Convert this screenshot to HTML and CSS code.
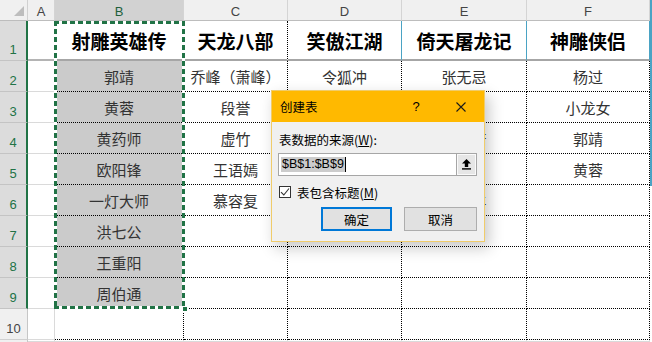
FILE: index.html
```html
<!DOCTYPE html>
<html lang="zh-CN">
<head>
    <meta charset="UTF-8">
    <title>创建表</title>
    <link rel="stylesheet" href="styles.css">
</head>
<body>
    <div class="wrap">
        <div class="sheet">
            <div class="corner"><svg width="10" height="10" viewBox="0 0 10 10"><polygon points="10,0 10,10 0,10" fill="#bdbdbd"/></svg></div>
            <div class="ch">A</div>
            <div class="ch on">B</div>
            <div class="ch">C</div>
            <div class="ch">D</div>
            <div class="ch">E</div>
            <div class="ch">F</div>

            <div class="rh on">1</div>
            <div class="a top"></div>
            <div class="c t">射雕英雄传</div>
            <div class="c t">天龙八部</div>
            <div class="c t tl">笑傲江湖</div>
            <div class="c t tl">倚天屠龙记</div>
            <div class="c t tl">神雕侠侣</div>

            <div class="rh on">2</div>
            <div class="a"></div>
            <div class="c b">郭靖</div>
            <div class="c">乔峰（萧峰）</div>
            <div class="c">令狐冲</div>
            <div class="c">张无忌</div>
            <div class="c">杨过</div>

            <div class="rh on">3</div>
            <div class="a"></div>
            <div class="c b">黄蓉</div>
            <div class="c">段誉</div>
            <div class="c"></div>
            <div class="c"></div>
            <div class="c">小龙女</div>

            <div class="rh on">4</div>
            <div class="a"></div>
            <div class="c b">黄药师</div>
            <div class="c">虚竹</div>
            <div class="c"></div>
            <div class="c">周芷若</div>
            <div class="c">郭靖</div>

            <div class="rh on">5</div>
            <div class="a"></div>
            <div class="c b">欧阳锋</div>
            <div class="c">王语嫣</div>
            <div class="c"></div>
            <div class="c"></div>
            <div class="c">黄蓉</div>

            <div class="rh on">6</div>
            <div class="a"></div>
            <div class="c b">一灯大师</div>
            <div class="c">慕容复</div>
            <div class="c"></div>
            <div class="c">张三丰</div>
            <div class="c"></div>

            <div class="rh on">7</div>
            <div class="a"></div>
            <div class="c b">洪七公</div>
            <div class="c"></div>
            <div class="c"></div>
            <div class="c"></div>
            <div class="c"></div>

            <div class="rh on">8</div>
            <div class="a"></div>
            <div class="c b">王重阳</div>
            <div class="c"></div>
            <div class="c"></div>
            <div class="c"></div>
            <div class="c"></div>

            <div class="rh on">9</div>
            <div class="a"></div>
            <div class="c b">周伯通</div>
            <div class="c"></div>
            <div class="c"></div>
            <div class="c"></div>
            <div class="c"></div>

            <div class="rh">10</div>
            <div class="a"></div>
            <div class="c"></div>
            <div class="c"></div>
            <div class="c"></div>
            <div class="c"></div>
            <div class="c"></div>

            <div class="rh"></div>
            <div class="a"></div>
            <div class="a"></div>
            <div class="a"></div>
            <div class="a"></div>
            <div class="a"></div>
            <div class="a"></div>

            <!-- copy marquee around B1:B9 -->
            <div class="marquee"></div>
        </div>
        <div class="edge"></div>
    </div>

    <div class="dialog">
        <div class="dlg-title">
            <span class="dlg-name">创建表</span>
            <span class="dlg-help">?</span>
            <svg class="dlg-close" width="10" height="10" viewBox="0 0 10 10"><path d="M0.5 0.5L9.5 9.5M9.5 0.5L0.5 9.5" stroke="#1a1a1a" stroke-width="1.1"/></svg>
        </div>
        <div class="dlg-body">
            <div class="dlg-label">表数据的来源(<u>W</u>):</div>
            <div class="range">
                <div class="range-input"><span class="range-sel">$B$1:$B$9</span><span class="caret"></span></div>
                <div class="range-btn">
                    <svg width="9" height="11" viewBox="0 0 9 11"><path d="M4.5 0L9 4.5H6.2V8H2.8V4.5H0Z" fill="#000"/><rect x="0" y="9.2" width="9" height="1.4" fill="#000"/></svg>
                </div>
            </div>
            <div class="check">
                <span class="box"><svg width="10" height="10" viewBox="0 0 10 10"><path d="M1 5.2L3.8 8L9 1.5" stroke="#333" stroke-width="1.1" fill="none"/></svg></span>
                <span>表包含标题(<u>M</u>)</span>
            </div>
            <div class="dlg-actions">
                <div class="btn primary">确定</div>
                <div class="btn cancel">取消</div>
            </div>
        </div>
    </div>
</body>
</html>
```

FILE: styles.css
```css
body {
    margin: 0;
    width: 652px;
    height: 342px;
    overflow: hidden;
    position: relative;
    background: #fff;
    font-family: "Noto Sans CJK SC", "Noto Sans", sans-serif;
}
.wrap {
    display: flex;
}
.sheet {
    position: relative;
    display: grid;
    grid-template-columns: 28px 27px 129px 104px 114px 125px 123px;
    grid-template-rows: 21px 40px repeat(9, 31px) 2px;
}
.sheet > div {
    box-sizing: border-box;
    display: flex;
    align-items: center;
    justify-content: center;
    white-space: nowrap;
}
.edge {
    width: 2px;
    height: 186px;
    background: #4aa3c4;
}

/* headers */
.corner {
    background: #f0f0f0;
    border-right: 1px solid #d0d0d0;
    border-bottom: 1px solid #bdbdbd;
    align-items: flex-end !important;
    justify-content: flex-end !important;
    padding: 0 3px 4px 0;
}
.ch {
    background: #f0f0f0;
    border-right: 1px solid #d4d4d4;
    border-bottom: 1px solid #bdbdbd;
    font-family: "Liberation Sans", Arial, sans-serif;
    font-size: 13px;
    color: #444;
    padding-top: 3px;
}
.ch.on {
    background: #d2d2d2;
    color: #1f5f3b;
}
.rh {
    background: #f0f0f0;
    border-right: 1px solid #c6c6c6;
    border-bottom: 1px solid #d0d0d0;
    font-family: "Liberation Sans", Arial, sans-serif;
    font-size: 13px;
    color: #444;
    align-items: flex-end !important;
    padding-bottom: 3px;
}
.rh.on {
    background: #dcdcdc;
    color: #217346;
    border-right: 2px solid #217346;
    border-bottom-color: #c4c4c4;
}

/* cells */
.a {
    border-right: 1px solid #dadada;
    border-bottom: 1px solid #dadada;
}
.a.top {
    border-bottom: 2px solid #b4b4b4;
}
.c {
    border-right: 1px dotted #000;
    border-bottom: 1px dotted #000;
    font-size: 15px;
    color: #333;
}
.c.t {
    font-size: 19px;
    font-weight: 700;
    color: #000;
    border-bottom: 2px solid #a6a6a6;
}
.c.tl {
    border-right: 1px solid #4aa3c4;
}
.c.b {
    background: #cbcbcb;
}

.marquee {
    position: absolute;
    grid-column: 3 / 4;
    grid-row: 2 / 11;
    top: 0;
    bottom: 0;
    left: -1px;
    right: -1px;
    background:
        repeating-linear-gradient(90deg, #217346 0 5px, #fff 5px 8px) top left / 100% 3px no-repeat,
        repeating-linear-gradient(90deg, #217346 0 5px, #fff 5px 8px) bottom left / 100% 3px no-repeat,
        repeating-linear-gradient(180deg, #217346 0 5px, #fff 5px 8px) top left / 3px 100% no-repeat,
        repeating-linear-gradient(180deg, #217346 0 5px, #fff 5px 8px) top right / 3px 100% no-repeat;
}
.marquee::after {
    content: '';
    position: absolute;
    right: -3px;
    bottom: -3px;
    width: 4px;
    height: 4px;
    background: #217346;
    border: 1px solid #fff;
}

/* dialog */
.dialog {
    position: absolute;
    left: 271px;
    top: 90px;
    width: 214px;
    height: 152px;
    box-sizing: border-box;
    border: 1px solid #f0cc6a;
    background: #f0f0f0;
    box-shadow: 4px 6px 14px rgba(0,0,0,0.22);
    font-size: 12.5px;
    color: #000;
}
.dlg-title {
    height: 31px;
    display: flex;
    align-items: center;
    background: #ffb900;
    padding: 0 18px 0 8px;
}
.dlg-name {
    flex: 1;
}
.dlg-help {
    width: 14px;
    text-align: center;
    margin-right: 33px;
    font-family: "Liberation Sans", Arial, sans-serif;
    font-size: 13px;
}
.dlg-body {
    padding: 0 7px 0 6px;
}
.dlg-label {
    margin-top: 10px;
    padding-left: 1px;
    line-height: 16px;
}
.range {
    margin-top: 5px;
    height: 23px;
    box-sizing: border-box;
    display: flex;
    border: 1px solid #a6a6a6;
    background: #fff;
}
.range-input {
    flex: 1;
    display: flex;
    align-items: center;
    padding-left: 2px;
}
.range-sel {
    font-family: "Liberation Sans", Arial, sans-serif;
    font-size: 12.5px;
    line-height: 15px;
    background: #cccccc;
    padding: 0 1px;
}
.caret {
    width: 1px;
    height: 15px;
    background: #000;
}
.range-btn {
    width: 19px;
    display: flex;
    align-items: center;
    justify-content: center;
    background: #e6e6e6;
    border-left: 1px solid #a6a6a6;
    box-shadow: inset 0 0 0 1px #fafafa;
}
.check {
    margin-top: 10px;
    display: flex;
    align-items: center;
    gap: 6px;
    padding-left: 1px;
    height: 12px;
}
.box {
    width: 12px;
    height: 12px;
    box-sizing: border-box;
    border: 1px solid #333;
    background: #fff;
    display: flex;
    align-items: center;
    justify-content: center;
}
.dlg-actions {
    margin-top: 9px;
    display: flex;
    justify-content: flex-end;
    gap: 12px;
}
.btn {
    height: 24px;
    box-sizing: border-box;
    display: flex;
    align-items: center;
    justify-content: center;
    background: #e1e1e1;
    border: 1px solid #adadad;
}
.btn.primary {
    width: 71px;
    border: 2px solid #0078d7;
}
.btn.cancel {
    width: 73px;
}
```
